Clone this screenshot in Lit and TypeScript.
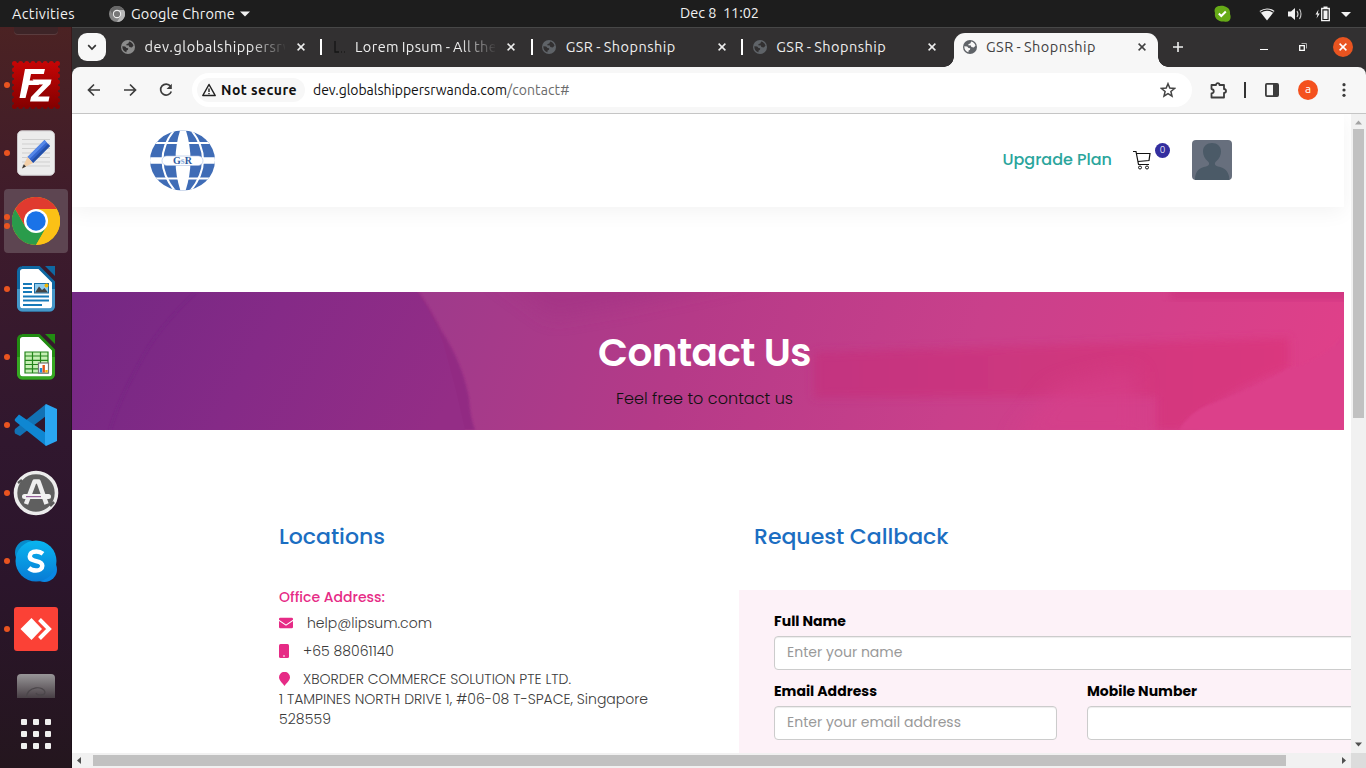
import { LitElement, html, css, svg } from "lit";
import { customElement, property } from "lit/decorators.js";

/** A single line of text tracked so that it fills a given measure in pixels. */
@customElement("text-run")
class TextRun extends LitElement {
  static styles = css`
    :host { display: inline-block; white-space: pre; }
  `;
  @property({ type: Number }) w = 0;
  @property() text = "";
  render() {
    return html`${this.text}`;
  }
  firstUpdated() {
    const natural = this.getBoundingClientRect().width;
    if (this.w && natural) {
      this.style.letterSpacing = (this.w - natural) / this.text.length + "px";
    }
  }
}

const run = (text: string, w: number) => html`<text-run .text=${text} .w=${w}></text-run>`;

const globe = (color: string) => html`
  <svg width="14" height="14" viewBox="0 0 14 14">
    <circle cx="7" cy="7" r="7" fill=${color} />
    <path class="land" d="M1.3 6.2 4.2 6.6 5.5 8 7.2 8.3 7 9.8 5.6 10.6 5.4 12.3C3 11.6 1.2 9.4 1.3 6.2Z" />
    <path class="land" d="M8.2 1.5C10.4 2 12 3.600 12.500 5.800L10.700 7.400 8.300 6.900 7.900 5.500 5.200 5.300 5.600 4 7.300 3.600Z" />
  </svg>`;

const cross = html`<svg width="8" height="8" viewBox="0 0 8 8"><path d="M.6.6 7.400 7.400M7.400.6.6 7.400" fill="none" stroke="currentColor" stroke-width="1.500" /></svg>`;

const filezilla = html`
  <svg width="48" height="48" viewBox="0 0 48 48">
    <defs><linearGradient id="fz" x2="0" y2="1"><stop stop-color="#c40505" /><stop offset="1" stop-color="#850000" /></linearGradient></defs>
    <rect x="2" y="2" width="44" height="44" fill="url(#fz)" />
    <rect x="2.500" y="2.500" width="43" height="43" fill="none" stroke="url(#fz)" stroke-width="5" stroke-linecap="round" stroke-dasharray="0.010 6.133" />
    <path d="M13 8h20l-1.200 5H19l-1.300 6.500h10l-1 4.500H16.800L13.500 37H7.500Z" fill="#fff" />
    <path d="M20.500 18.500h19L38.500 23 26 35.500h11.500L36.500 40.500H18L19 36 31 23.500H24Z" fill="#fff" />
  </svg>`;

const notes = html`
  <svg width="38" height="46" viewBox="0 0 38 46">
    <rect x=".5" y=".8" width="37" height="44.500" rx="4.500" fill="#ececec" stroke="#c9c5c8" />
    <path d="M5 9.500h28M5 14h28M5 18.500h28M5 23h28M5 27.500h28M5 32h28M5 36h28" stroke="#cfcfcf" stroke-width="1" />
    <path d="M27.500 10 33 16 16 33 10.500 27Z" fill="#3566cf" />
    <path d="M27.500 10 29.500 12.200 12.500 29 10.500 27Z" fill="#5688e8" />
    <path d="M31 14 33 16 16 33 14.200 31Z" fill="#2450a8" />
    <path d="M10.500 27 16 33 5 38.500Z" fill="#f3cfa8" />
    <path d="M6.800 34.300 9 36.600 5 38.500Z" fill="#333" />
  </svg>`;

const chrome = html`
  <svg width="48" height="48" viewBox="0 0 48 48">
    <circle cx="24" cy="24" r="24" fill="#fbbc09" />
    <path d="M3.200 12A24 24 0 0 0 24 48L34.400 30 24 24 13.600 30Z" fill="#2a9c4b" />
    <path d="M3.200 12A24 24 0 0 1 44.800 12H24L13.600 30Z" fill="#e03a2f" />
    <path d="M44.800 12A24 24 0 0 1 24 48L34.400 30 24 12Z" fill="#fbc116" />
    <circle cx="24" cy="24" r="12" fill="#fff" />
    <circle cx="24" cy="24" r="9.700" fill="#1a73e8" />
  </svg>`;

const officeDoc = (edge: string, edge2: string, body: unknown) => html`
  <svg width="38" height="46" viewBox="0 0 38 46">
    <path d="M5 1.500H22L36.500 16V40a4 4 0 0 1-4 4H5.500a4 4 0 0 1-4-4V5.500a4 4 0 0 1 4-4Z" fill="#fff" stroke=${edge} stroke-width="3" />
    <path d="M1.500 23V40a4 4 0 0 0 4 4H32.500a4 4 0 0 0 4-4V23" fill="none" stroke=${edge2} stroke-width="3" />
    <path d="M28 0h10V10Z" fill=${edge} />
    ${body}
  </svg>`;

const writer = officeDoc("#0f68a2", "#4497c9", svg`
  <path d="M6 18h9M6 22h9M6 26h9M6 30.500h26M6 34.500h26M6 39h19" stroke="#1679b8" stroke-width="2" />
  <rect x="17.500" y="17.500" width="14" height="9.500" fill="#8ecbee" stroke="#176fa8" />
  <path d="M18 26.500 22 20.500 25 24 27.500 22 31 26.500Z" fill="#444" /><circle cx="29.500" cy="19.500" r="2" fill="#f4b600" />`);

const calc = officeDoc("#228c12", "#36a822", svg`
  <path d="M8 18H31V39H8Z" fill="#c5efb4" />
  <path d="M8 18H31V39H8ZM8 22H31M8 26.300H31M8 30.500H31M8 34.800H31M15.500 18V39M23.500 18V39" fill="none" stroke="#23841a" stroke-width="1.200" />
  <rect x="21.500" y="29" width="10" height="10" fill="#fff" stroke="#777" stroke-width="1.200" />
  <path d="M24 38.500V34" stroke="#1f8fdc" stroke-width="2.400" /><path d="M26.700 38.500V31" stroke="#e2571a" stroke-width="2.400" /><path d="M29.500 38.500V36" stroke="#f4b600" stroke-width="2.400" />`);

const vscode = html`
  <svg width="44" height="44" viewBox="0 0 44 44">
    <path d="M1 26 32 1V13L6 33 1 30.500Q0 28 1 26Z" fill="#1272b4" />
    <path d="M1 16 5 11.500 32 30V43L1.500 18.500Q0 17 1 16Z" fill="#0f87d2" />
    <path d="M32 1 43 6V38L32 43Q31 42 31 40V4Q31 2 32 1Z" fill="#2aa6f2" />
  </svg>`;

const software = html`
  <svg width="46" height="46" viewBox="0 0 46 46">
    <circle cx="23" cy="23" r="20.500" fill="#5f5f5f" stroke="#ececec" stroke-width="3.600" />
    <path d="M5 13 9 10M37 36 41 32" stroke="#5a5a5a" stroke-width="2.600" />
    <path d="M13 34 21.500 11.500H25.500L33.500 34" fill="none" stroke="#eee" stroke-width="4.500" stroke-linejoin="round" />
    <rect x="9" y="24" width="29" height="5" rx="2.500" fill="#f2f2f2" /><path d="M13 26.700H28" stroke="#7f3f84" />
  </svg>`;

const skype = html`
  <svg width="44" height="44" viewBox="0 0 44 44">
    <defs><linearGradient id="sk" x2="0" y2="1"><stop stop-color="#09b5ef" /><stop offset="1" stop-color="#087bd5" /></linearGradient></defs>
    <circle cx="13.500" cy="13.500" r="12.500" fill="#078bcb" /><circle cx="30.500" cy="30.500" r="12.500" fill="#0a88e4" />
    <circle cx="22" cy="22" r="20.500" fill="url(#sk)" />
    <path d="M29 14.800Q26 12.500 22.500 12.500C17.500 12.500 15.800 15 15.800 17.200 15.800 24 28.300 20.300 28.300 26.700 28.300 29.700 25.500 31.500 22 31.500Q17.500 31.500 14.800 29" fill="none" stroke="#fff" stroke-width="4.500" />
  </svg>`;

const anydesk = html`
  <svg width="44" height="44" viewBox="0 0 44 44">
    <rect width="44" height="44" rx="3" fill="#fb4136" />
    <path d="M17.500 11 28 22 17.500 33 6.500 22Z" fill="#fff" />
    <path d="M25.500 12.500 35 22 25.500 31.500" fill="none" stroke="#fff" stroke-width="4" />
  </svg>`;

const dockItems = [
  { icon: filezilla, dots: 1 },
  { icon: notes, dots: 1 },
  { icon: chrome, dots: 2, active: true },
  { icon: writer, dots: 1 },
  { icon: calc, dots: 1 },
  { icon: vscode, dots: 1 },
  { icon: software, dots: 1 },
  { icon: skype, dots: 1 },
  { icon: anydesk, dots: 1 },
];

@customElement("app-dock")
class AppDock extends LitElement {
  static styles = css`
    :host { display: flex; flex-direction: column; width: 72px; gap: 4px; overflow: hidden; box-sizing: border-box;
      background: linear-gradient(#4b2223 0, #3d1b2c 28%, #30172e 56%, #2b152b 75%, #24161e 100%); box-shadow: inset -1px 0 rgba(0,0,0,.25); }
    svg { display: block; }
    .peek { height: 22px; flex: none; display: flex; justify-content: center; }
    .peek span { width: 44px; height: 7px; border-radius: 0 0 4px 4px; background: #3d2427; box-shadow: 0 1px #5a3c3e; box-sizing: border-box; }
    .item { position: relative; height: 64px; margin: 0 4px; flex: none; display: grid; place-items: center; border-radius: 4px; }
    .active { background: #5d4551; }
    .dots { position: absolute; left: 0; top: 0; height: 64px; display: flex; flex-direction: column; justify-content: center; gap: 3px; }
    .dots i { width: 6px; height: 6px; border-radius: 50%; background: #e95420; }
    .last { height: 24px; padding-top: 9px; flex: none; display: flex; justify-content: center; }
    .grid { display: grid; grid-template-columns: repeat(3, 6px); gap: 6px; justify-content: center; margin-top: 17px; }
    .grid i { width: 6px; height: 6px; border-radius: 1px; background: #f0efee; }
  `;
  render() {
    return html`
      <div class="peek"><span></span></div>
      ${dockItems.map(d => html`<div class="item ${d.active ? "active" : ""}">
        <div class="dots">${Array.from({ length: d.dots }, () => html`<i></i>`)}</div>${d.icon}</div>`)}
      <div class="last">
        <svg width="38" height="24" viewBox="0 0 38 24">
          <defs><linearGradient id="fade" x2="0" y2="1"><stop stop-color="#989698" /><stop offset="1" stop-color="#483f45" /></linearGradient></defs>
          <path d="M0 24V4a4 4 0 0 1 4-4H34a4 4 0 0 1 4 4V24Z" fill="url(#fade)" />
          <path d="M9 24C11 11 27 12 28 18 28 22 20 22 19 19" fill="none" stroke="#4b464a" stroke-width="1.200" />
        </svg>
      </div>
      <div class="grid">${Array.from({ length: 9 }, () => html`<i></i>`)}</div>`;
  }
}

@customElement("browser-chrome")
class BrowserChrome extends LitElement {
  static styles = css`
    :host { display: block; color: #fff; font: 14.500px/20px "Ubuntu", "Noto Sans", sans-serif; }
    svg { display: block; flex: none; }
    .strip { height: 39px; box-sizing: border-box; padding-bottom: 1px; background: #323031; display: flex; align-items: center; }
    .search { width: 28px; height: 28px; margin: 0 4px 0 6px; border-radius: 9px; background: #f7f7f7; display: grid; place-items: center; }
    .tab { width: 210.600px; height: 28px; box-sizing: border-box; padding: 0 16px 0 11px; display: flex; align-items: center; position: relative; color: #eee; flex: none; word-spacing: -1px; }
    .tab + .tab::before { content: ""; position: absolute; left: -.6px; top: 6px; width: 2px; height: 16px; background: #fff; }
    .tab.current::before { display: none; }
    .land { fill: #323031; }
    .title { width: 140px; margin-left: 9.500px; overflow: hidden; height: 20px; flex: none; }
    .clip { -webkit-mask-image: linear-gradient(90deg, #000 105px, transparent 142px); mask-image: linear-gradient(90deg, #000 105px, transparent 142px); }
    .tab > svg:last-child { margin-left: auto; }
    .tab.current { width: 204px; height: 34px; margin: 5px 0 0 1.600px; padding: 0 12px 6px 9px; border-radius: 11px 11px 0 0; background: #f7f7f7; color: #414141; align-self: flex-start; }
    .current .title { margin-left: 9px; }
    .current .land { fill: #f7f7f7; }
    .flare { position: absolute; bottom: 0; width: 10px; height: 10px; }
    .flare.l { left: -10px; background: radial-gradient(circle at 0 0, transparent 9.500px, #f7f7f7 10px); }
    .flare.r { right: -10px; background: radial-gradient(circle at 100% 0, transparent 9.500px, #f7f7f7 10px); }
    .plus { margin-left: 15px; }
    .win { margin-left: auto; display: flex; align-items: center; gap: 31px; padding-right: 13px; }
    .close { width: 20px; height: 20px; border-radius: 50%; background: #e95420; display: grid; place-items: center; margin-left: -5px; }
    .under { background: #323031; }
    .bar { height: 47px; box-sizing: border-box; border-bottom: 1px solid #c5c5c5; border-radius: 8px 8px 0 0; background: #f7f7f7; color: #3c3c3c; display: flex; align-items: center; padding: 0 20px 0 15px; }
    .nav { display: flex; gap: 22px; }
    .omni { width: 1000px; height: 34px; border-radius: 17px; background: #fff; margin-left: 19px; display: flex; align-items: center; box-sizing: border-box; padding: 0 16px 0 5px; flex: none; }
    .secure { height: 24px; width: 108px; box-sizing: border-box; border-radius: 12px; background: #f7f7f7; display: flex; align-items: center; gap: 5px; padding-left: 5px; font-weight: 700; color: #111; margin-right: 8px; font-size: 14px; }
    .url { color: #111; font-size: 14px; white-space: nowrap; }
    .path { color: #6b6b6b; }
    .star { margin-left: auto; }
    .tools { display: flex; align-items: center; margin-left: auto; }
    .me { width: 20px; height: 20px; border-radius: 50%; background: #f4511e; color: #fff; font-size: 12px; text-align: center; line-height: 18px; margin: 0 24px 0 19px; }
    .rule { width: 2px; height: 16px; background: #333; margin: 0 19px 0 17px; }
  `;
  render() {
    const gsr = run("GSR - Shopnship", 110);
    return html`
      <div class="strip">
        <div class="search"><svg width="10" height="7" viewBox="0 0 10 7"><path d="M1.200 1.200 5 5 8.800 1.200" fill="none" stroke="#333" stroke-width="1.700" /></svg></div>
        <div class="tab">${globe("#8b8b8b")}<div class="title clip">${run("dev.globalshippersrw", 150)}</div>${cross}</div>
        <div class="tab"><svg width="14" height="14" viewBox="0 0 14 14"><path d="M3 1V12H7" fill="none" stroke="#151515" stroke-width="1.300" /><path d="M9 12h1M12 12h1" stroke="#111" /></svg><div class="title clip">${run("Lorem Ipsum - All the", 142)}</div>${cross}</div>
        <div class="tab">${globe("#5f6368")}<div class="title">${gsr}</div>${cross}</div>
        <div class="tab">${globe("#5f6368")}<div class="title">${gsr}</div>${cross}</div>
        <div class="tab current"><span class="flare l"></span>${globe("#5f6368")}<div class="title">${gsr}</div><span class="flare r"></span>${cross}</div>
        <svg class="plus" width="10" height="10" viewBox="0 0 10 10"><path d="M5 0V10M0 5H10" stroke="#eee" stroke-width="1.600" /></svg>
        <div class="win">
          <svg width="8" height="10" viewBox="0 0 8 10"><path d="M0 7.500H8" stroke="#fff" /></svg>
          <svg width="8" height="8" viewBox="0 0 8 8"><path d="M.7 2.700H5.300V7.300H.7Z" fill="none" stroke="#fff" stroke-width="1.300" /><path d="M2.500.5H7.500V5.500" fill="none" stroke="#aaa" /></svg>
          <div class="close">${cross}</div>
        </div>
      </div>
      <div class="under"><div class="bar">
        <div class="nav">
          <svg width="14" height="14" viewBox="0 0 14 14"><path d="M13 7H2M7 1.500 1.500 7 7 12.500" fill="none" stroke="currentColor" stroke-width="1.700" /></svg>
          <svg width="14" height="14" viewBox="0 0 14 14"><path d="M1 7H12M7 1.500 12.500 7 7 12.500" fill="none" stroke="currentColor" stroke-width="1.700" /></svg>
          <svg width="14" height="14" viewBox="0 0 14 14"><path d="M11.500 3.200A5.500 5.500 0 1 0 12.300 8.500" fill="none" stroke="currentColor" stroke-width="1.700" /><path d="M12.800.8V6H7.600Z" fill="currentColor" /></svg>
        </div>
        <div class="omni">
          <div class="secure"><svg width="14" height="14" viewBox="0 0 14 14"><path d="M7 1.500 13.200 12.500H.8Z" fill="none" stroke="#222" stroke-width="1.500" stroke-linejoin="round" /><path d="M7 5.500V9M7 10V11.300" stroke="#222" stroke-width="1.400" /></svg>${run("Not secure", 76)}</div>
          <div class="url">${run("dev.globalshippersrwanda.com", 194)}<span class="path">${run("/contact#", 62.5)}</span></div>
          <svg class="star" width="16" height="16" viewBox="0 0 16 16"><path d="M8 1.700 9.800 6.100 14.500 6.500 10.900 9.500 12 14.100 8 11.600 4 14.100 5.100 9.500 1.500 6.500 6.200 6.100Z" fill="none" stroke="#444" stroke-width="1.500" /></svg>
        </div>
        <div class="tools">
          <svg width="17" height="17" viewBox="0 0 17 17"><path d="M1.500 3H6C6 .5 9.500.5 9.500 3H14V7C16.700 7.300 16.700 10.700 14 11V15.500H1.500V11.500C4.500 11 4.500 7.500 1.500 7Z" fill="none" stroke="#3c3c3c" stroke-width="1.800" stroke-linejoin="round" /></svg>
          <span class="rule"></span>
          <svg width="14" height="14" viewBox="0 0 14 14"><rect x=".9" y=".9" width="12.200" height="12.200" rx="1" fill="none" stroke="#3c3c3c" stroke-width="1.800" /><path d="M8 1H13V13H8Z" fill="#3c3c3c" /></svg>
          <span class="me">a</span>
          <svg width="4" height="14" viewBox="0 0 4 14" fill="#3c3c3c"><circle cx="2" cy="1.700" r="1.600" /><circle cx="2" cy="7" r="1.600" /><circle cx="2" cy="12.300" r="1.600" /></svg>
        </div>
      </div></div>`;
  }
}

const logo = html`
  <svg width="66" height="62" viewBox="0 0 66 62">
    <defs><clipPath id="sphere"><ellipse cx="33.500" cy="31.500" rx="32.500" ry="30" /></clipPath></defs>
    <g clip-path="url(#sphere)">
      <rect width="66" height="62" fill="#3f6cb6" />
      <path d="M31.500 0Q21.500 31 31.500 62H36.500Q46.500 31 36.500 0Z" fill="#fff" />
      <path d="M26 0Q1 31 26 62M41.500 0Q66.500 31 41.500 62" fill="none" stroke="#fff" stroke-width="2" />
      <path d="M0 14H66M0 49.500H66" fill="none" stroke="#fff" stroke-width="2.200" />
      <path d="M0 31.500H66" stroke="#fff" stroke-width="6.500" />
    </g>
    <rect x="13" y="27" width="41" height="9.500" rx="4.700" fill="#fff" stroke="#a9bee0" stroke-width=".6" />
    <text x="24" y="35.300" font-family="Liberation Serif, serif" font-weight="700" font-size="10" fill="#2f5aa0">G<tspan fill="#8fb0dc">s</tspan>R</text>
  </svg>`;

const heroArt = html`
  <svg class="art" width="1272" height="138" viewBox="0 0 1272 138" preserveAspectRatio="none">
    <defs>
      <linearGradient id="base" gradientUnits="userSpaceOnUse" x1="340" y1="0" x2="1200" y2="300">
        <stop stop-color="#9d3a8b" /><stop offset=".3" stop-color="#b53a88" /><stop offset=".6" stop-color="#c9408b" /><stop offset="1" stop-color="#e04089" />
      </linearGradient>
      <linearGradient id="lobe" gradientUnits="userSpaceOnUse" x1="0" y1="0" x2="340" y2="180">
        <stop stop-color="#732883" /><stop offset=".5" stop-color="#852a87" /><stop offset="1" stop-color="#942d86" />
      </linearGradient>
      <linearGradient id="band" x1="0" x2="1" y1="0" y2="0"><stop stop-color="#c4337e" /><stop offset="1" stop-color="#da357b" /></linearGradient>
      <filter id="soft"><feGaussianBlur stdDeviation="4" /></filter>
      <filter id="haze" x="-60%" y="-100%" width="220%" height="300%"><feGaussianBlur stdDeviation="10" /></filter>
      <filter id="edge"><feGaussianBlur stdDeviation="1" /></filter>
    </defs>
    <rect width="1272" height="138" fill="url(#base)" />
    <path d="M420 -20H700L560 10 480 24Z" fill="#a33184" opacity=".6" filter="url(#haze)" />
    <path d="M742 60 1217 46V76Q1150 100 1109 138H1085V105L742 106Z" fill="url(#band)" opacity=".8" filter="url(#soft)" />
    <path d="M980 96Q1040 76 1066 80V150H940Z" fill="#d7408a" opacity=".6" filter="url(#haze)" />
    <path d="M1098 -10H1290V8H1098Z" fill="#cd347f" opacity=".8" filter="url(#soft)" />
    <path d="M1107 138Q1118 120 1136 113 1180 98 1217 76 1250 70 1272 42V138Z" fill="#dc408a" filter="url(#edge)" />
    <path d="M0 0H347Q358 16 369 38 390 70 397 106 398 125 403 138H0Z" fill="#922983" filter="url(#edge)" />
    <path d="M0 0H345Q365 30 372 54 384 96 393 138H0Z" fill="url(#lobe)" />
    <path d="M124 0Q85 36 67 72 46 110 38 138" fill="none" stroke="#752080" stroke-opacity=".3" stroke-width="3" filter="url(#edge)" />
  </svg>`;

@customElement("contact-page")
class ContactPage extends LitElement {
  static styles = css`
    :host { display: block; width: 1279px; height: 639px; overflow: hidden; background: #fff; color: #3b3b3b;
      font: 300 14px/20px "Poppins", "Inter", sans-serif; font-feature-settings: "cv11" 1; }
    svg { display: block; }
    header { width: 1272px; height: 93px; box-sizing: border-box; padding: 0 112px 2px 77px; display: flex; align-items: center; box-shadow: 0 5px 20px rgba(0,0,0,.05); background: #fff; }
    .upgrade { margin-left: auto; font: 500 16px/24px "Poppins", "Inter", sans-serif; color: #2ba59c; }
    .cart { position: relative; margin: 0 41px 0 21px; }
    .badge { position: absolute; left: 22px; top: -7px; width: 15px; height: 15px; border-radius: 50%; background: #332e9f; color: #fff; font-size: 9px; line-height: 15px; text-align: center; }
    .hero { position: relative; width: 1272px; height: 138px; margin-top: 85px; text-align: center; overflow: hidden; }
    .art { position: absolute; inset: 0; }
    .copy { position: relative; padding-top: 37px; padding-right: 7px; }
    h1 { margin: 0; font-size: 39px; line-height: 48px; font-weight: 600; color: #fff; }
    .sub { margin-top: 10px; font-size: 16px; line-height: 24px; color: #111; }
    .columns { display: grid; grid-template-columns: 475px 616px; padding: 92px 0 0 207px; }
    h2 { margin: 0; font-size: 22px; line-height: 30px; font-weight: 500; color: #1b6ec2; }
    .office { margin-top: 35px; color: #e62b86; font-weight: 500; }
    .line { display: flex; align-items: center; margin-top: 8px; }
    .office + .line { margin-top: 6px; }
    .line svg { fill: #e62b86; }
    .mail { margin-right: 14px; }
    .phone { margin-right: 14px; }
    .pin { margin-right: 13px; }
    .panel { margin: 38px 0 0 -15px; width: 666px; height: 180px; box-sizing: border-box; padding: 21px 35px 0; background: #fdf2f8; }
    .row { display: grid; grid-template-columns: 283px 283px; column-gap: 30px; margin-top: 11px; }
    label { display: block; font-weight: 700; color: #000; margin-bottom: 5px; }
    .field { height: 34px; box-sizing: border-box; border: 1px solid #ccc; border-radius: 4px; background: #fff; box-shadow: inset 0 1px 1px rgba(0,0,0,.075); padding: 5px 12px; color: #999; font-weight: 400; }
  `;
  render() {
    return html`
      <header>
        ${logo}
        <div class="upgrade">${run("Upgrade Plan", 109.500)}</div>
        <div class="cart">
          <svg width="18" height="20" viewBox="0 0 18 20"><path d="M0 1.500H3L5.500 14.500H16M3.500 3.500H17L16 10.500 5 11.500" fill="none" stroke="#111" stroke-width="1.200" /><circle cx="7" cy="17.500" r="1.500" fill="none" stroke="#111" /><circle cx="14" cy="17.500" r="1.500" fill="none" stroke="#111" /></svg>
          <span class="badge">0</span>
        </div>
        <svg width="40" height="40" viewBox="0 0 40 40"><rect width="40" height="40" rx="4" fill="#676f7d" /><path d="M3 40C3 30 8 28 14 26.500 18 25.500 17.500 23 16 21.500 12.500 18.500 11 15 11 11.500 11 6 15 3 20 3S29 6 29 11.500C29 15 27.500 18.500 24 21.500 22.500 23 22 25.500 26 26.500 32 28 37 30 37.500 40Z" fill="#4b5a67" /></svg>
      </header>
      <section class="hero">
        ${heroArt}
        <div class="copy"><h1>${run("Contact Us", 213)}</h1><div class="sub">${run("Feel free to contact us", 177)}</div></div>
      </section>
      <div class="columns">
        <section>
          <h2>${run("Locations", 106)}</h2>
          <div class="office">${run("Office Address:", 106)}</div>
          <div class="line"><svg class="mail" width="14" height="12" viewBox="0 0 14 12"><path d="M1.300.8H12.700A1.300 1.300 0 0 1 14 2.100V2.700L7 7.500 0 2.700V2.100A1.300 1.300 0 0 1 1.300.8ZM0 4 7 8.800 14 4V10A1.300 1.300 0 0 1 12.700 11.300H1.300A1.300 1.300 0 0 1 0 10Z" /></svg>${run("help@lipsum.com", 125)}</div>
          <div class="line"><svg class="phone" width="10" height="14" viewBox="0 0 10 14"><rect width="10" height="14" rx="1.500" /><path d="M4 12H6" stroke="#fff" stroke-width="1" /></svg>${run("+65 88061140", 91)}</div>
          <div class="line"><svg class="pin" width="11" height="14" viewBox="0 0 11 14"><path d="M5.500 14C4.500 12.300 0 8.500 0 5.300A5.400 5.400 0 0 1 11 5.300C11 8.500 6.500 12.300 5.500 14Z" /></svg>${run("XBORDER COMMERCE SOLUTION PTE LTD.", 268)}</div>
          <div>${run("1 TAMPINES NORTH DRIVE 1, #06-08 T-SPACE, Singapore", 369)}</div>
          <div>${run("528559", 52)}</div>
        </section>
        <section>
          <h2>${run("Request Callback", 194.5)}</h2>
          <div class="panel">
            <label>${run("Full Name", 72)}</label>
            <div class="field">${run("Enter your name", 115.5)}</div>
            <div class="row">
              <div><label>${run("Email Address", 103)}</label><div class="field">${run("Enter your email address", 174)}</div></div>
              <div><label>${run("Mobile Number", 110)}</label><div class="field"></div></div>
            </div>
          </div>
        </section>
      </div>`;
  }
}

@customElement("app-root")
class AppRoot extends LitElement {
  static styles = css`
    :host { display: grid; grid-template: 27px 741px / 72px 1294px; width: 1366px; height: 768px; overflow: hidden; }
    svg { display: block; }
    .top { grid-column: 1 / 3; background: #1d1d1d; color: #f2f2f2; font: 14.500px/26px "Ubuntu", "Noto Sans", sans-serif; display: grid; grid-template-columns: 668px auto 1fr; align-items: center; padding: 0 14px 0 12px; }
    .left, .status { display: flex; align-items: center; }
    .left svg:first-of-type { margin: 0 6px 0 34px; }
    .left svg:last-of-type { margin-left: 5px; }
    .clock { line-height: 24px; padding-bottom: 2px; }
    .status { justify-content: flex-end; }
    .window { display: grid; grid-template-rows: 86px 639px 15px; border-top: 1px solid #474747; }
    .view { display: flex; }
    .vbar { width: 15px; background: #f1f1f1; display: flex; flex-direction: column; align-items: center; box-sizing: border-box; padding: 6px 0; }
    .vthumb { width: 11px; height: 289px; margin-top: 4px; background: #c1c1c1; }
    .vbar svg:last-child { margin-top: auto; }
    .hbar { background: #f1f1f1; display: flex; align-items: center; padding-left: 5px; }
    .hthumb { width: 1193px; height: 11px; margin-left: 12px; background: #c1c1c1; }
    .hbar svg:nth-of-type(2) { margin-left: auto; margin-right: 5px; }
    .corner { width: 15px; height: 15px; background: #dcdcdc; }
  `;
  render() {
    return html`
      <div class="top">
        <div class="left">${run("Activities", 63)}
          <svg width="16" height="16" viewBox="0 0 16 16"><circle cx="8" cy="8" r="8" fill="#858585" /><path d="M1 4A8 8 0 0 1 15 4H8A4 4 0 0 0 4.500 10Z" fill="#686868" /><path d="M15 4A8 8 0 0 1 8 16L11.500 10 8 4Z" fill="#b6b6b6" /><circle cx="8" cy="8" r="4.200" fill="#eee" /><circle cx="8" cy="8" r="3.100" fill="#777" /></svg>
          ${run("Google Chrome", 104)}
          <svg width="10" height="6" viewBox="0 0 10 6"><path d="M0 .5H10L5 5.500Z" fill="#f2f2f2" /></svg>
        </div>
        <div class="clock">${run("Dec 8  11:02", 79)}</div>
        <div class="status">
          <svg width="138" height="18" viewBox="0 0 138 18">
            <path d="M6 1C9 0 17 2 16 9 18 14 15 18 10 16.500 4 17 0 13 1 8-.5 4 2 1 6 1Z" fill="#66aa17" /><path d="M4.800 8.500 7.300 11 11.800 6.500" fill="none" stroke="#fff" stroke-width="2" />
            <path d="M45.500 6Q53 .8 60.500 6L53 15.500Z" fill="#f2f2f2" /><path d="M46.500 7.200Q53 3 59.500 7.200" fill="none" stroke="#1d1d1d" stroke-width="1.200" />
            <path d="M74 6.500H77L81 3V15L77 11.500H74Z" fill="#f2f2f2" /><path d="M83 6Q85 9 83 12M85.500 4Q88.500 9 85.500 14" fill="none" stroke="#ccc" stroke-width="1.100" />
            <path d="M104.500 4.500 101.500 9.500H103.500L102.500 13.500 105.800 8.500H103.800Z" fill="#f2f2f2" /><path d="M107.700 3.500H115.300V15.700H107.700Z" fill="none" stroke="#f2f2f2" stroke-width="1.300" /><path d="M109.500 5.500H113.500V14H109.500ZM109.500 1.500H113.500V3H109.500Z" fill="#f2f2f2" />
            <path d="M127 7H137L132 12Z" fill="#f2f2f2" />
          </svg>
        </div>
      </div>
      <app-dock></app-dock>
      <div class="window">
        <browser-chrome></browser-chrome>
        <div class="view">
          <contact-page></contact-page>
          <div class="vbar">
            <svg width="7" height="5" viewBox="0 0 7 5"><path d="M0 4.500H7L3.500.5Z" fill="#a3a3a3" /></svg>
            <div class="vthumb"></div>
            <svg width="7" height="5" viewBox="0 0 7 5"><path d="M0 .5H7L3.500 4.500Z" fill="#505050" /></svg>
          </div>
        </div>
        <div class="hbar">
          <svg width="4" height="7" viewBox="0 0 4 7"><path d="M4 0V7L0 3.500Z" fill="#505050" /></svg>
          <div class="hthumb"></div>
          <svg width="4" height="7" viewBox="0 0 4 7"><path d="M0 0V7L4 3.500Z" fill="#505050" /></svg>
          <div class="corner"></div>
        </div>
      </div>`;
  }
}
